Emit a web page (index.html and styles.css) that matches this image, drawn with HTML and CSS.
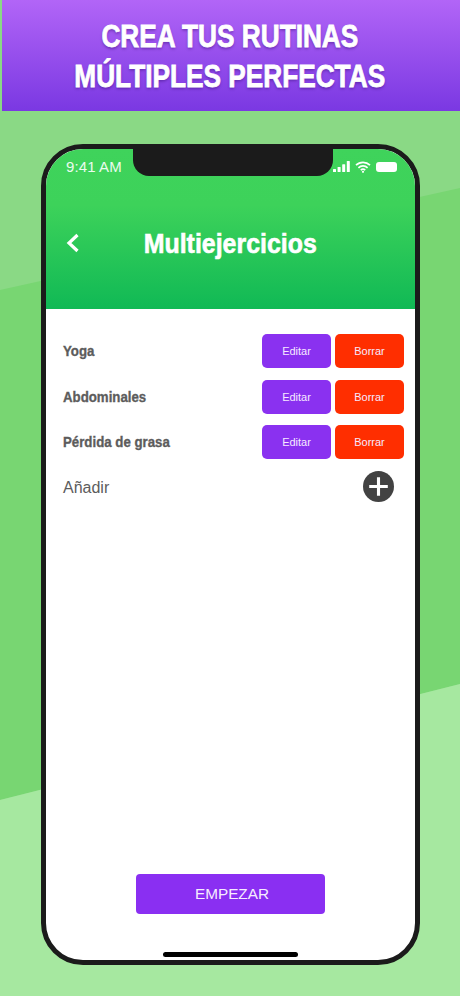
FILE: index.html
```html
<!DOCTYPE html>
<html lang="es">
<head>
<meta charset="utf-8">
<title>Multiejercicios</title>
<link rel="stylesheet" href="styles.css">
</head>
<body>
<div class="page">
  <svg class="bands" viewBox="0 0 460 996" preserveAspectRatio="none" aria-hidden="true">
    <polygon class="band-mid" points="0,290 460,188 460,684 0,800"/>
    <polygon class="band-low" points="0,800 460,684 460,996 0,996"/>
  </svg>
  <header class="banner">
    <h1 class="banner-title"><span class="squeeze">CREA TUS RUTINAS</span><br><span class="squeeze">MÚLTIPLES PERFECTAS</span></h1>
  </header>
  <main class="stage">
    <div class="phone">
      <div class="notch"></div>
      <section class="topbar">
        <div class="status">
          <span class="time">9:41 AM</span>
          <span class="status-icons">
            <svg class="ic-signal" viewBox="0 0 17 11"><rect x="0" y="8" width="3" height="3" rx=".6"/><rect x="4.6" y="6" width="3" height="5" rx=".6"/><rect x="9.2" y="3.2" width="3" height="7.8" rx=".6"/><rect x="13.8" y="0" width="3" height="11" rx=".6"/></svg>
            <svg class="ic-wifi" viewBox="0 0 16 12"><path d="M1 4.2a10 10 0 0 1 14 0M3.4 6.8a6.6 6.6 0 0 1 9.2 0M5.8 9.1a3.2 3.2 0 0 1 4.4 0"/><circle cx="8" cy="10.8" r="1.1"/></svg>
            <span class="ic-battery"></span>
          </span>
        </div>
        <div class="nav">
          <svg class="back" viewBox="0 0 14 20"><path d="M11.5 2 3 10l8.500 8"/></svg>
          <h2 class="nav-title">Multiejercicios</h2>
        </div>
      </section>
      <section class="content">
        <div class="list">
          <div class="row"><span class="row-name">Yoga</span><span class="actions"><button class="btn btn-edit">Editar</button><button class="btn btn-del">Borrar</button></span></div>
          <div class="row"><span class="row-name">Abdominales</span><span class="actions"><button class="btn btn-edit">Editar</button><button class="btn btn-del">Borrar</button></span></div>
          <div class="row"><span class="row-name">Pérdida de grasa</span><span class="actions"><button class="btn btn-edit">Editar</button><button class="btn btn-del">Borrar</button></span></div>
          <div class="row row-add"><span class="add-label">Añadir</span><span class="add-icon"><svg viewBox="0 0 30 30"><path d="M6 15h18M15 6v18"/></svg></span></div>
        </div>
        <button class="start">EMPEZAR</button>
        <div class="home"></div>
      </section>
    </div>
  </main>
</div>
</body>
</html>
```
FILE: styles.css
```css
* { box-sizing: border-box; }
html, body { margin: 0; padding: 0; }
body { font-family: "Liberation Sans", Arial, sans-serif; background: #8ad985; }
.page { position: relative; width: 460px; height: 996px; overflow: hidden; background: #8ad985; display: flex; flex-direction: column; }
.bands { position: absolute; inset: 0; width: 460px; height: 996px; }
.band-mid { fill: #78d672; }
.band-low { fill: #a6e8a0; }
.banner { position: relative; height: 111px; margin-left: 2px; padding: 17px 2px 0 0; background: linear-gradient(#b265f7, #7a38e2); }
.banner-title { margin: 0; text-align: center; color: #fff; font-family: "Liberation Sans", sans-serif; font-weight: 700; font-size: 31px; line-height: 40px; -webkit-text-stroke: .8px #fff; text-shadow: 0 2px 3px rgba(50,10,110,.45); }
.squeeze { display: inline-block; white-space: nowrap; transform: scaleX(.846); }
.stage { position: relative; flex: 1; padding: 33px 40px 31px 41px; }
.phone { position: relative; height: 821px; border: 5.500px solid #1b1b1b; border-radius: 42px; overflow: hidden; background: #fff; display: flex; flex-direction: column; }
.notch { position: absolute; top: -1px; left: 87px; width: 200px; height: 28px; background: #1b1b1b; border-radius: 0 0 16px 16px; z-index: 2; }
.topbar { height: 160px; background: linear-gradient(#3fd35b 0, #3dd25a 35%, #10b955 100%); color: #fff; }
.status { height: 29px; padding: 6px 18px 0 20px; display: flex; justify-content: space-between; align-items: center; }
.time { font-size: 15px; letter-spacing: .1px; color: #eafbee; }
.status-icons { display: flex; align-items: center; gap: 5px; }
.ic-signal { width: 17px; height: 11px; fill: #fff; }
.ic-wifi { width: 16px; height: 12px; fill: #fff; }
.ic-wifi path { fill: none; stroke: #fff; stroke-width: 1.700; }
.ic-battery { width: 21px; height: 10px; background: #fff; border-radius: 3px; }
.nav { position: relative; height: 64px; margin-top: 34px; display: flex; align-items: center; justify-content: center; }
.nav-title { margin: 0; font-family: "Liberation Sans", sans-serif; font-weight: 700; font-size: 28px; color: #fff; -webkit-text-stroke: .6px #fff; transform: scaleX(.89); }
.back { position: absolute; left: 20px; top: 21px; width: 14px; height: 20px; fill: none; stroke: #fff; stroke-width: 3.200; }
.content { flex: 1; position: relative; display: flex; flex-direction: column; }
.list { padding: 25px 11px 0 17px; display: flex; flex-direction: column; gap: 11.700px; }
.row { height: 34px; display: flex; justify-content: space-between; align-items: center; }
.row-name { display: inline-block; white-space: nowrap; transform: scaleX(.855); transform-origin: left center; font-family: "Liberation Sans", sans-serif; font-weight: 700; font-size: 15.500px; color: #5c5c5c; -webkit-text-stroke: .35px #5c5c5c; }
.actions { display: flex; gap: 4px; }
.btn { width: 69px; height: 34px; border: 0; border-radius: 5px; padding: 0; color: #f6e9ff; font-family: "Liberation Sans", sans-serif; font-size: 11px; }
.btn-edit { background: #8a31f0; }
.btn-del { background: #ff2e00; }
.add-label { font-size: 16px; color: #5c5c5c; }
.row-add { padding-right: 10px; }
.add-icon { width: 31px; height: 31px; margin-top: -3px; border-radius: 50%; background: #424242; display: flex; }
.add-icon svg { width: 31px; height: 31px; fill: none; stroke: #fff; stroke-width: 3; }
.start { position: absolute; left: 89.500px; top: 565px; width: 189px; height: 40px; border: 0; border-radius: 4px; padding: 0 0 0 4px; background: #8a2ff2; color: #f6ecff; font-family: "Liberation Sans", sans-serif; font-size: 15.300px; }
.home { position: absolute; left: 117px; bottom: 3px; width: 135px; height: 5px; border-radius: 3px; background: #000; }
```
